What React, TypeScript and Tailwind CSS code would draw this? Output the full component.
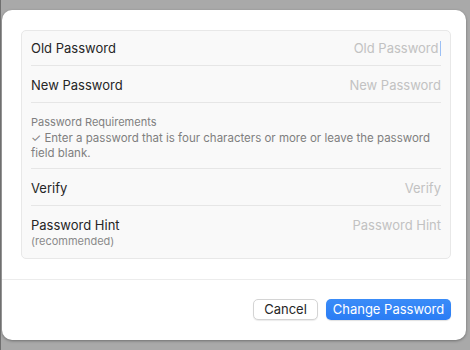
const font = { fontFamily: 'Inter, "Liberation Sans", sans-serif' }

function Row({ label, placeholder, sub, caret }: { label: string; placeholder: string; sub?: string; caret?: boolean }) {
  return (
    <div className="flex items-start justify-between">
      <div className="flex flex-col">
        <span className="text-[13px] leading-[16px] text-[#262626]">{label}</span>
        {sub && <span className="mt-[1px] text-[11px] leading-[14px] text-[#8a8a8a]">{sub}</span>}
      </div>
      <div className="flex items-center">
        <span className="text-[13px] leading-[16px] text-[#c2c2c2]">{placeholder}</span>
        {caret && <span className="ml-[1px] h-[15px] w-[1.5px] bg-[#9cc0f5]" />}
      </div>
    </div>
  )
}

export default function App() {
  return (
    <div className="h-[350px] w-[470px] overflow-hidden border-l border-[#6f6f6f] bg-[#a9a9a9] pt-[10px] pl-[1px]" style={font}>
      <div className="flex h-[330px] w-[464px] flex-col rounded-[10px] bg-white shadow-[0_1px_3px_rgba(0,0,0,0.35)]">
        <div className="pt-[20px] pl-[19px]">
          <div className="flex h-[229px] w-[430px] flex-col rounded-[5px] border border-[#e8e8e8] bg-[#f9f9f9] px-[9px]">
            <div className="h-[35px] border-b border-[#e6e6e6] pt-[9px]">
              <Row label="Old Password" placeholder="Old Password" caret />
            </div>
            <div className="h-[37px] border-b border-[#e6e6e6] pt-[11px]">
              <Row label="New Password" placeholder="New Password" />
            </div>
            <div className="h-[66px] border-b border-[#e6e6e6] pt-[12px] text-[11.5px] leading-[15px] text-[#7f7f7f]">
              <div className="text-[11px]">Password Requirements</div>
              <div className="mt-[1px] max-w-[400px]">✓ Enter a password that is four characters or more or leave the password field blank.</div>
            </div>
            <div className="h-[37px] border-b border-[#e6e6e6] pt-[11px]">
              <Row label="Verify" placeholder="Verify" />
            </div>
            <div className="pt-[11px]">
              <Row label="Password Hint" placeholder="Password Hint" sub="(recommended)" />
            </div>
          </div>
        </div>
        <div className="mt-[20px] h-px w-full bg-[#ececec]" />
        <div className="flex justify-end gap-[8px] pt-[19px] pr-[15px]">
          <button className="h-[21px] w-[65px] rounded-[5px] border border-[#d4d4d4] bg-white text-[13px] text-[#262626] shadow-[0_1px_1px_rgba(0,0,0,0.08)]">
            Cancel
          </button>
          <button className="h-[21px] w-[125px] rounded-[5px] bg-gradient-to-b from-[#3a8cf8] to-[#2a7cf4] text-[13px] text-white shadow-[0_1px_1px_rgba(0,0,0,0.12)]">
            Change Password
          </button>
        </div>
      </div>
    </div>
  )
}
